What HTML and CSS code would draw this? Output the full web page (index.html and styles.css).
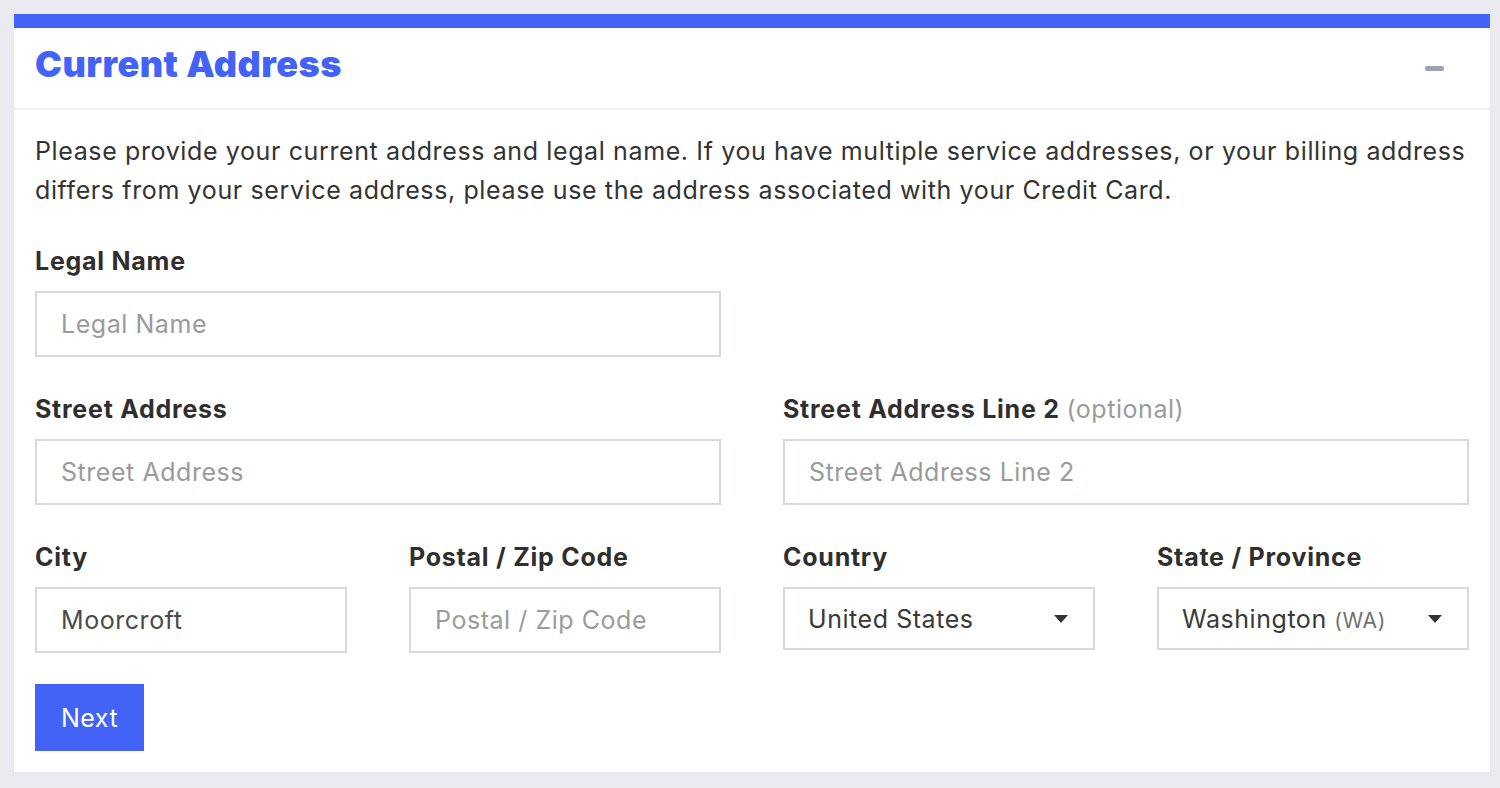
FILE: index.html
```html
<!DOCTYPE html>
<html lang="en">
<head>
<meta charset="utf-8">
<title>Current Address</title>
<link rel="stylesheet" href="styles.css">
</head>
<body>
<section class="card">
  <header class="card-head">
    <h1 class="card-title">Current Address</h1>
    <span class="collapse" aria-label="Collapse"></span>
  </header>
  <div class="card-body">
    <p class="intro">Please provide your current address and legal name. If you have multiple service addresses, or your billing address differs from your service address, please use the address associated with your Credit Card.</p>
    <form class="grid">
      <div class="field span2">
        <label class="label">Legal Name</label>
        <input class="input" type="text" placeholder="Legal Name">
      </div>
      <div class="field span2 newrow">
        <label class="label">Street Address</label>
        <input class="input" type="text" placeholder="Street Address">
      </div>
      <div class="field span2">
        <label class="label">Street Address Line 2 <span class="opt">(optional)</span></label>
        <input class="input" type="text" placeholder="Street Address Line 2">
      </div>
      <div class="field">
        <label class="label">City</label>
        <input class="input filled" type="text" value="Moorcroft">
      </div>
      <div class="field">
        <label class="label">Postal / Zip Code</label>
        <input class="input" type="text" placeholder="Postal / Zip Code">
      </div>
      <div class="field">
        <label class="label">Country</label>
        <div class="select"><span>United States</span><svg class="caret" width="14" height="8" viewBox="0 0 14 8"><path d="M0 0h14L7 8z" fill="#333"/></svg></div>
      </div>
      <div class="field">
        <label class="label">State / Province</label>
        <div class="select"><span>Washington <span class="abbr">(WA)</span></span><svg class="caret" width="14" height="8" viewBox="0 0 14 8"><path d="M0 0h14L7 8z" fill="#333"/></svg></div>
      </div>
      <div class="actions">
        <button class="btn" type="button">Next</button>
      </div>
    </form>
  </div>
</section>
</body>
</html>
```

FILE: styles.css
```css
* { box-sizing: border-box; }
html, body { margin: 0; padding: 0; }
body {
  background: #e9ebf0;
  padding: 14px 10px 16px 14px;
  font-family: Inter, "Noto Sans", sans-serif;
  color: #333;
}
.card {
  width: 1476px;
  background: #fff;
  border-top: 14px solid #4263f6;
}
.card-head {
  height: 82px;
  border-bottom: 2px solid #f2f2f4;
  display: flex;
  align-items: center;
  justify-content: space-between;
  padding: 0 46px 0 21px;
}
.card-title {
  margin: 0 0 8px 0;
  font-family: Inter, sans-serif;
  font-weight: 900;
  font-size: 36px;
  line-height: 44px;
  letter-spacing: 0.5px;
  color: #4263f6;
}
.collapse {
  display: block;
  width: 19px;
  height: 5px;
  border-radius: 2px;
  background: #9aa1b5;
}
.card-body {
  padding: 22px 21px 21px 21px;
}
.intro {
  margin: 0 0 36px 0;
  font-size: 25px;
  line-height: 39px;
  letter-spacing: 0.62px;
  color: #333;
}
.grid {
  display: grid;
  grid-template-columns: repeat(4, 312px);
  column-gap: 62px;
  row-gap: 37px;
}
.span2 { grid-column: span 2; }
.newrow { grid-column: 1 / span 2; }
.field { display: flex; flex-direction: column; }
.label {
  font-size: 25px;
  font-weight: 700;
  line-height: 30px;
  letter-spacing: 0.75px;
  margin-bottom: 15px;
  color: #2f2f2f;
}
.opt { font-weight: 400; color: #9b9b9b; letter-spacing: 0.55px; }
.input {
  height: 66px;
  border: 2px solid #d6d9df;
  border-radius: 0;
  padding: 0 24px;
  font-family: inherit;
  font-size: 25px;
  letter-spacing: 0.55px;
  color: #4a4a4a;
  outline: none;
  width: 100%;
}
.input::placeholder { color: #9b9b9b; }
.select {
  height: 63px;
  border: 2px solid #d6d9df;
  padding: 0 25px 0 23px;
  display: flex;
  align-items: center;
  justify-content: space-between;
  font-size: 25px;
  letter-spacing: 0.55px;
  color: #3a3a3a;
}
.abbr { font-size: 21px; color: #707070; }
.actions { grid-column: 1 / -1; margin-top: -6px; }
.btn {
  height: 67px;
  width: 109px;
  border: 0;
  border-radius: 0;
  background: #4263f6;
  color: #fff;
  font-family: inherit;
  font-size: 25px;
  letter-spacing: 0.5px;
  cursor: pointer;
  padding: 0;
}
```
